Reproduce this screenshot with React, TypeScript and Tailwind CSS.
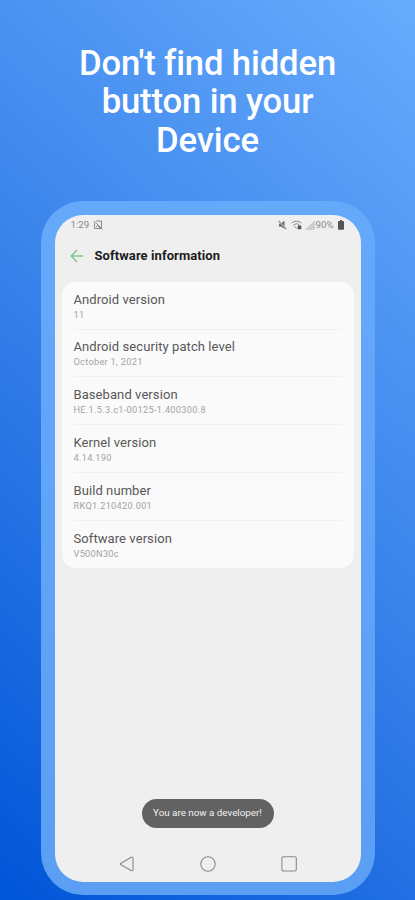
const rows = [
  { title: "Android version", value: "11" },
  { title: "Android security patch level", value: "October 1, 2021" },
  { title: "Baseband version", value: "HE.1.5.3.c1-00125-1.400300.8" },
  { title: "Kernel version", value: "4.14.190" },
  { title: "Build number", value: "RKQ1.210420.001" },
  { title: "Software version", value: "V500N30c" },
];

function StatusBar() {
  return (
    <div className="flex h-[20px] items-center justify-between pl-[16px] pr-[17px] text-[9.7px] leading-none text-[#8a8a8a]">
      <div className="flex items-center gap-[4px]">
        <span>1:29</span>
        <svg width="10" height="10" viewBox="0 0 10 10" fill="none" stroke="#888" strokeWidth="1">
          <path d="M3 1H8.5V8.5H1.5V3M1 1L9.5 9.5M3 7L4.5 5.5L7 8" />
        </svg>
      </div>
      <div className="flex items-center">
        <svg className="mr-[4px]" width="9" height="10" viewBox="0 0 9 10" fill="none">
          <path d="M1 3.5H3L6.5 .8V9L3 6.5H1Z" fill="#666" />
          <path d="M.5 .7L8.5 9.3" stroke="#f0f0f0" strokeWidth="1.4" />
          <path d="M.5 .7L8.5 9.3" stroke="#555" strokeWidth=".9" />
        </svg>
        <svg className="mr-[3px]" width="11" height="10" viewBox="0 0 11 10" fill="none" stroke="#888" strokeWidth="1">
          <path d="M.7 3Q5.5-.8 10.3 3M2.4 5Q5.5 2.5 8 4.5M3.5 6.3L5.5 8.5" />
          <path d="M7 5.8H10V9H7Z" fill="#555" stroke="#555" strokeWidth=".6" />
        </svg>
        <svg className="mr-[1px]" width="10" height="10" viewBox="0 0 10 10">
          <path d="M.3 9.3L9.5 .5V9.3Z" fill="#cfcfcf" />
          <path d="M.5 9.2H9.4V1" fill="none" stroke="#bbb" strokeWidth=".6" />
        </svg>
        <span className="mr-[4px]">90%</span>
        <svg width="6" height="10" viewBox="0 0 6 10" fill="#555">
          <path d="M2 0H4V1H5.2Q6 1 6 1.8V9Q6 9.7 5.2 9.7H.8Q0 9.7 0 9V1.8Q0 1 .8 1H2Z" />
        </svg>
      </div>
    </div>
  );
}

export default function App() {
  return (
    <main className="flex h-[900px] w-[415px] flex-col items-center overflow-hidden bg-[linear-gradient(223deg,#68acfd_0%,#3781ea_50%,#0055d8_100%)] font-['Roboto',sans-serif]">
      <h1 className="flex h-[201px] shrink-0 flex-col items-center pt-[44px] text-[34.7px] font-medium leading-[38.3px] tracking-[-0.15px] text-white">
        <span>Don't find hidden</span>
        <span>button in your</span>
        <span>Device</span>
      </h1>
      <section className="h-[694px] w-[334px] shrink-0 rounded-[42px] bg-[linear-gradient(180deg,#65a9fb,#5b9ff4)] p-[14px] pb-[13.5px]">
        <div className="flex h-full flex-col overflow-hidden rounded-[28px] bg-[#efefef]">
          <StatusBar />
          <header className="flex h-[47px] items-center pb-[6px] pl-[15px] pt-[1px]">
            <svg width="14" height="14" viewBox="0 0 14 14" fill="none" stroke="#79c984" strokeWidth="1.4">
              <path d="M13 7H1.5M7 1L1.2 7L7 13" />
            </svg>
            <span className="ml-[11px] text-[13px] font-bold leading-none tracking-[0.08px] text-[#1c1c1c]">Software information</span>
          </header>
          <div className="mx-[7px] flex h-[286px] flex-col rounded-[14px] bg-[#fafafa] px-[12px]">
            {rows.map((r, i) => (
              <div key={r.title} className={`flex flex-1 flex-col pt-[9.8px] ${i ? "border-t border-[#f0f0f0]" : ""}`}>
                <span className="whitespace-nowrap text-[13px] leading-[16px] tracking-[0.08px] text-[#585858]">{r.title}</span>
                <span className="whitespace-nowrap text-[9.2px] leading-[13.4px] tracking-[0.3px] text-[#a3a3a3]">{r.value}</span>
              </div>
            ))}
          </div>
          <div className="mt-[231px] flex h-[29px] w-[132px] shrink-0 items-center justify-center self-center rounded-full bg-[#626262] pt-[1px] text-[9.8px] text-[#f0f0f0]">
            You are now a developer!
          </div>
          <nav className="flex h-[54px] items-center justify-between px-[64px] pt-[18px]">
            <svg width="16" height="18" viewBox="0 0 16 18" fill="none" stroke="#8a8a8a" strokeWidth="1.1">
              <path d="M12.2 2.2L2 8.2Q1 9 2 9.8L12.2 15.6Q14 16.3 14 14.5V3.3Q14 1.5 12.2 2.2Z" />
            </svg>
            <svg width="16" height="18" viewBox="0 0 16 18" fill="none" stroke="#8a8a8a" strokeWidth="1.1">
              <circle cx="8" cy="9" r="7.2" />
            </svg>
            <svg width="16" height="18" viewBox="0 0 16 18" fill="none" stroke="#8a8a8a" strokeWidth="1.1">
              <rect x=".9" y="1.8" width="14.4" height="14.2" rx="1.5" />
            </svg>
          </nav>
        </div>
      </section>
    </main>
  );
}
